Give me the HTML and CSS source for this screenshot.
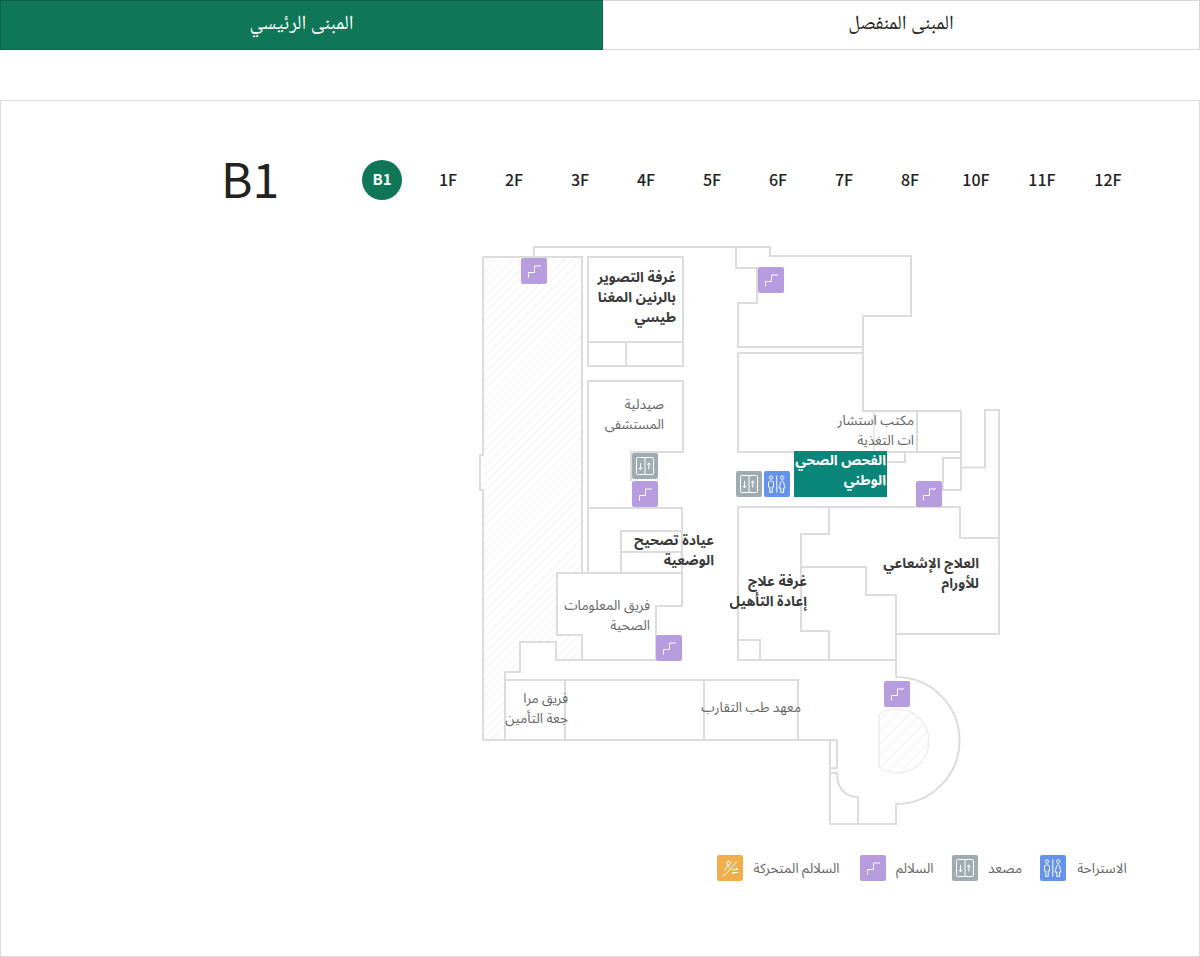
FILE: index.html
```html
<!DOCTYPE html>
<html lang="ar">
<head>
<meta charset="utf-8">
<title>B1</title>
<link rel="stylesheet" href="styles.css">
</head>
<body>
<svg class="defs" width="0" height="0" aria-hidden="true">
  <defs>
    <pattern id="hatch" width="6" height="6" patternUnits="userSpaceOnUse" patternTransform="rotate(45)">
      <line x1="0" y1="0" x2="0" y2="6" stroke="#dedede" stroke-width="0.800"/>
    </pattern>
    <pattern id="hatch2" width="8.500" height="8.500" patternUnits="userSpaceOnUse" patternTransform="rotate(45)">
      <line x1="0" y1="0" x2="0" y2="8.500" stroke="#dcdcdc" stroke-width="0.900"/>
    </pattern>
    <symbol id="i-stairs" viewBox="0 0 26 26">
      <rect width="26" height="26" rx="2" fill="#b79ce0"/>
      <path d="M7.500 19.500V14.500H13.500V8H20" fill="none" stroke="#fff" stroke-width="1"/>
    </symbol>
    <symbol id="i-lift" viewBox="0 0 26 26">
      <rect width="26" height="26" rx="2" fill="#9fadb2"/>
      <rect x="4.500" y="4.500" width="17" height="17" rx="1" fill="none" stroke="#fff" stroke-width="1"/>
      <path d="M13 4.500v17" stroke="#fff" stroke-width="1"/>
      <path d="M8.500 10v6.500M7 14.800l1.500 2 1.500-2M16.800 16.500V10M15.300 11.800l1.500-2 1.500 2" fill="none" stroke="#fff" stroke-width="1"/>
    </symbol>
    <symbol id="i-wc" viewBox="0 0 26 26">
      <rect width="26" height="26" rx="2" fill="#6592ea"/>
      <path d="M12.800 4.500v17" stroke="#fff" stroke-width="1"/>
      <circle cx="7" cy="6.500" r="1.700" fill="none" stroke="#fff"/>
      <circle cx="18.200" cy="6.500" r="1.700" fill="none" stroke="#fff"/>
      <path d="M4.500 16V12a2 2 0 0 1 2-2h1a2 2 0 0 1 2 2v4H8.200v5.500H5.800V16z" fill="none" stroke="#fff"/>
      <path d="M18.200 10c-1.800 0-2 3-3.200 7h1.800v4.500h2.800V17h1.400c-1.200-4-1-7-2.800-7z" fill="none" stroke="#fff"/>
    </symbol>
    <symbol id="i-esc" viewBox="0 0 26 26">
      <rect width="26" height="26" rx="2" fill="#f1af4b"/>
      <circle cx="11.500" cy="8" r="1.900" fill="none" stroke="#fff"/>
      <path d="M5 20.500h2.500L20 6.500" fill="none" stroke="#fff"/>
      <path d="M10.500 10.500L7.500 15.500M10.500 10.500l3 3" fill="none" stroke="#fff"/>
      <path d="M15 14.500h6M19 13l2 1.500M21 17.500h-6M17 19l-2-1.500" fill="none" stroke="#fff"/>
    </symbol>
  </defs>
</svg>

<nav class="tabs">
  <a class="tab tab-on">المبنى الرئيسي</a>
  <a class="tab tab-off">المبنى المنفصل</a>
</nav>

<main class="panel">
  <header class="floor-head">
    <h1 class="floor-name">B1</h1>
    <ul class="floors">
      <li class="floor floor-on"><span class="floor-dot">B1</span></li>
      <li class="floor">1F</li>
      <li class="floor">2F</li>
      <li class="floor">3F</li>
      <li class="floor">4F</li>
      <li class="floor">5F</li>
      <li class="floor">6F</li>
      <li class="floor">7F</li>
      <li class="floor">8F</li>
      <li class="floor">10F</li>
      <li class="floor">11F</li>
      <li class="floor">12F</li>
    </ul>
  </header>

  <div class="map">
    <svg class="plan" width="540" height="600" viewBox="470 240 540 600">
      <g fill="url(#hatch)" stroke="none">
        <path d="M483 257H582V573H557V635H582V660H556V642H520V672H505V740H483V490H480V455H483Z"/>
      </g>
      <path d="M879 714.500A32 32 0 1 1 879 767.500Z" fill="url(#hatch2)" stroke="#eee" stroke-width="1.500"/>
      <g fill="none" stroke="#dcdcdc" stroke-width="2">
        <path d="M534 257V247H770V256H911V316H863V411H961V490H943V458H961M961 467.500H985V410H999V634H896"/>
        <path d="M736 247V268H757V303H738V347H863M863 316V411"/>
        <path d="M738 353H863M738 353V452H905V462H887M905 452H961M917 411V452"/>
        <path d="M738 507H960V538H999M738 507V660H896M829 507V534H801V631H829V660M801 567H866V595H896V677"/>
        <path d="M738 640H760V660"/>
        <path d="M896 677A63.500 63.500 0 0 1 896 804V824H830V740M837 740V768H830M830 773H837C837 788 845 797 858 797V824"/>
        <path d="M483 257H582V573M483 257V455H480V490H483V740H837M505 740V680H798V740M505 680V672H520V642H556V660H656V606H682V508H588M565 680V740M704 680V740"/>
        <path d="M588 257H683V366H588ZM588 342H683M626 342V366"/>
        <path d="M588 573V381H683V452H631V481M557 573H682M557 573V635H582V660M621 573V531H682M621 552H682"/>
      </g>
      <path d="M874 411V452" stroke="#e8e8e8" stroke-width="2"/>
      <use href="#i-stairs" x="521" y="258" width="26" height="26"/>
      <use href="#i-stairs" x="758" y="267" width="26" height="26"/>
      <use href="#i-lift" x="632" y="453" width="26" height="26"/>
      <use href="#i-stairs" x="632" y="481" width="26" height="26"/>
      <use href="#i-stairs" x="916" y="481" width="26" height="26"/>
      <use href="#i-stairs" x="656" y="635" width="26" height="26"/>
      <use href="#i-stairs" x="884" y="681" width="26" height="26"/>
      <use href="#i-lift" x="736" y="471" width="26" height="26"/>
      <use href="#i-wc" x="764" y="471" width="26" height="26"/>
    </svg>
    <div class="teal-room"></div>
    <p class="room strong r-mri">غرفة التصوير<br>بالرنين المغنا<br>طيسي</p>
    <p class="room r-pharm">صيدلية<br>المستشفى</p>
    <p class="room r-diet">مكتب استشار<br>ات التغذية</p>
    <p class="room strong r-check">الفحص الصحي<br>الوطني</p>
    <p class="room strong r-posture">عيادة تصحيح<br>الوضعية</p>
    <p class="room strong r-radio">العلاج الإشعاعي<br>للأورام</p>
    <p class="room strong r-rehab">غرفة علاج<br>إعادة التأهيل</p>
    <p class="room r-info">فريق المعلومات<br>الصحية</p>
    <p class="room r-insure">فريق مرا<br>جعة التأمين</p>
    <p class="room r-inst">معهد طب التقارب</p>
  </div>

  <ul class="legend">
    <li class="legend-item"><svg class="legend-icon" viewBox="0 0 26 26"><use href="#i-esc"/></svg><span class="legend-text lt-esc">السلالم المتحركة</span></li>
    <li class="legend-item"><svg class="legend-icon" viewBox="0 0 26 26"><use href="#i-stairs"/></svg><span class="legend-text lt-stairs">السلالم</span></li>
    <li class="legend-item"><svg class="legend-icon" viewBox="0 0 26 26"><use href="#i-lift"/></svg><span class="legend-text lt-lift">مصعد</span></li>
    <li class="legend-item"><svg class="legend-icon" viewBox="0 0 26 26"><use href="#i-wc"/></svg><span class="legend-text lt-wc">الاستراحة</span></li>
  </ul>
</main>
</body>
</html>
```
FILE: styles.css
```css
* { box-sizing: border-box; }
html, body { margin: 0; padding: 0; background: #fff; }
body { font-family: "Noto Sans CJK KR", "Noto Sans Arabic", sans-serif; color: #222; }
.defs { position: absolute; }
.tabs { display: flex; height: 50px; }
.tab { display: flex; align-items: center; justify-content: center; font-size: 20px; font-family: "Noto Naskh Arabic", serif; }
.tab-on { width: 603px; background: #0f7658; color: #fff; border: 1px solid #0b6449; }
.tab-off { flex: 1; background: #fff; color: #222; border: 1px solid #d6d6d6; border-left: 0; }
.panel { margin-top: 50px; height: 857px; border: 1px solid #ddd; padding-top: 59px; }
.floor-head { display: flex; align-items: center; height: 40px; padding-right: 58px; }
.floor-name { margin: 0 0 0 220px; padding-bottom: 6px; font-size: 48px; font-weight: 400; line-height: 38px; color: #222; }
.floors { display: flex; margin: 0 0 0 auto; padding: 0; list-style: none; }
.floor { width: 66px; height: 40px; padding-bottom: 3px; display: flex; align-items: center; justify-content: center; font-size: 16px; font-weight: 500; color: #222; }
.floor-on { padding-bottom: 0; }
.floor-dot { width: 40px; height: 40px; padding-bottom: 3px; border-radius: 50%; background: #0f7658; color: #fff; display: flex; align-items: center; justify-content: center; font-size: 15px; font-weight: 700; }
.map { position: relative; width: 540px; height: 600px; margin: 40px 0 0 469px; }
.plan { display: block; }
.teal-room { position: absolute; left: 324px; top: 211px; width: 93px; height: 46px; background: #0a857a; }
.room { position: absolute; margin: 0; direction: rtl; text-align: right; white-space: nowrap; font-family: "Noto Sans Arabic", sans-serif; font-size: 13.500px; line-height: 19.500px; color: #666; }
.strong { font-size: 14px; font-weight: 700; color: #3a3a3a; }
.r-mri { right: 334px; top: 28px; line-height: 20px; }
.r-pharm { right: 346px; top: 155px; }
.r-diet { right: 96px; top: 171px; }
.r-check { right: 124px; top: 211px; color: #fff; }
.r-posture { right: 296px; top: 291px; }
.r-radio { right: 31px; top: 314px; }
.r-rehab { right: 203px; top: 332px; }
.r-info { right: 360px; top: 356px; }
.r-insure { right: 442px; top: 449px; }
.r-inst { right: 209px; top: 458px; }
.legend { display: flex; justify-content: flex-end; gap: 20px; margin: 15px 0 0; padding: 0 71px 0 0; list-style: none; }
.legend-item { display: flex; align-items: center; gap: 10px; height: 26px; font-family: "Noto Sans Arabic", sans-serif; font-size: 13.500px; color: #666; }
.legend-icon { width: 26px; height: 26px; display: block; }
.legend-text { text-align: center; white-space: nowrap; }
.lt-esc { width: 87px; }
.lt-stairs { width: 36px; }
.lt-lift { width: 32px; }
.lt-wc { width: 52px; }
```
